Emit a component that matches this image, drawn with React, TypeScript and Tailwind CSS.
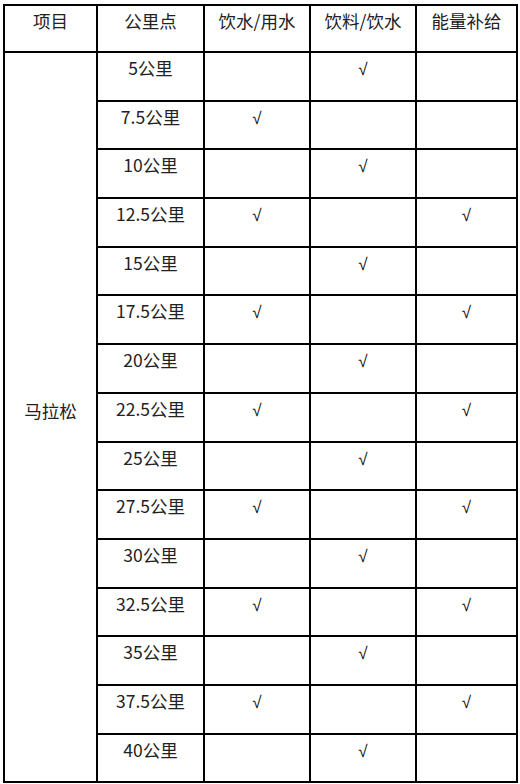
const rows = [
  { km: '5公里', drink: false, water: true, energy: false },
  { km: '7.5公里', drink: true, water: false, energy: false },
  { km: '10公里', drink: false, water: true, energy: false },
  { km: '12.5公里', drink: true, water: false, energy: true },
  { km: '15公里', drink: false, water: true, energy: false },
  { km: '17.5公里', drink: true, water: false, energy: true },
  { km: '20公里', drink: false, water: true, energy: false },
  { km: '22.5公里', drink: true, water: false, energy: true },
  { km: '25公里', drink: false, water: true, energy: false },
  { km: '27.5公里', drink: true, water: false, energy: true },
  { km: '30公里', drink: false, water: true, energy: false },
  { km: '32.5公里', drink: true, water: false, energy: true },
  { km: '35公里', drink: false, water: true, energy: false },
  { km: '37.5公里', drink: true, water: false, energy: true },
  { km: '40公里', drink: false, water: true, energy: false },
];

const cell = 'border-2 border-black align-top text-center pt-[3px] px-1 font-normal leading-[24px]';

function Check({ on }: { on: boolean }) {
  if (!on) return null;
  return <span className="text-[17px] text-[#111]" style={{ fontFamily: '"Liberation Sans", Arial, sans-serif' }}>√</span>;
}

export default function App() {
  return (
    <div
      className="w-[520px] h-[784px] bg-white pt-[4px] pl-[3px] text-[17.5px] text-[#222]"
      style={{ fontFamily: '"Microsoft YaHei", "Noto Sans CJK SC", sans-serif' }}
    >
      <table className="border-collapse table-fixed w-[513px]">
        <colgroup>
          <col className="w-[93px]" />
          <col className="w-[107px]" />
          <col className="w-[106px]" />
          <col className="w-[106px]" />
          <col className="w-[101px]" />
        </colgroup>
        <thead>
          <tr className="h-[47px]">
            <th className={cell}>项目</th>
            <th className={cell}>公里点</th>
            <th className={cell}>饮水/用水</th>
            <th className={cell}>饮料/饮水</th>
            <th className={cell}>能量补给</th>
          </tr>
        </thead>
        <tbody>
          {rows.map((r, i) => (
            <tr key={r.km} className="h-[48.7px]">
              {i === 0 && (
                <td rowSpan={rows.length} className="border-2 border-black text-center align-middle pb-[12px]">
                  马拉松
                </td>
              )}
              <td className={cell}>{r.km}</td>
              <td className={cell}><Check on={r.drink} /></td>
              <td className={cell}><Check on={r.water} /></td>
              <td className={cell}><Check on={r.energy} /></td>
            </tr>
          ))}
        </tbody>
      </table>
    </div>
  );
}
